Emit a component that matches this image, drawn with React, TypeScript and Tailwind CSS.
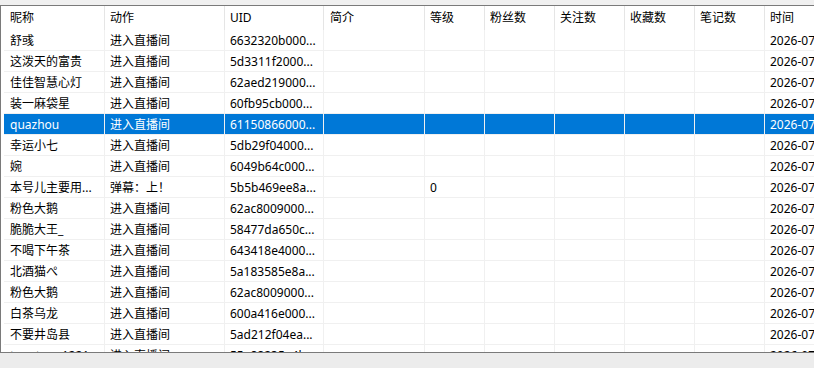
const font = { fontFamily: '"Noto Sans", "Noto Sans CJK SC", sans-serif' }

const cols = [
  { title: '昵称', w: 'w-[101px] pl-[6px]' },
  { title: '动作', w: 'w-[120px] pl-[5px]' },
  { title: 'UID', w: 'w-[99px] pl-[5px]' },
  { title: '简介', w: 'w-[101px] pl-[6px]' },
  { title: '等级', w: 'w-[60px] pl-[5px]' },
  { title: '粉丝数', w: 'w-[70px] pl-[5px]' },
  { title: '关注数', w: 'w-[70px] pl-[5px]' },
  { title: '收藏数', w: 'w-[70px] pl-[5px]' },
  { title: '笔记数', w: 'w-[70px] pl-[5px]' },
  { title: '时间', w: 'w-[160px] pl-[5px]' },
]

const rows: string[][] = [
  ['舒彧', '进入直播间', '6632320b000...', '', ''],
  ['这泼天的富贵', '进入直播间', '5d3311f2000...', '', ''],
  ['佳佳智慧心灯', '进入直播间', '62aed219000...', '', ''],
  ['装一麻袋星', '进入直播间', '60fb95cb000...', '', ''],
  ['quazhou', '进入直播间', '61150866000...', '', ''],
  ['幸运小七', '进入直播间', '5db29f04000...', '', ''],
  ['婉', '进入直播间', '6049b64c000...', '', ''],
  ['本号儿主要用...', '弹幕：上！', '5b5b469ee8a...', '', '0'],
  ['粉色大鹅', '进入直播间', '62ac8009000...', '', ''],
  ['脆脆大王_', '进入直播间', '58477da650c...', '', ''],
  ['不喝下午茶', '进入直播间', '643418e4000...', '', ''],
  ['北酒猫ぺ', '进入直播间', '5a183585e8a...', '', ''],
  ['粉色大鹅', '进入直播间', '62ac8009000...', '', ''],
  ['白茶乌龙', '进入直播间', '600a416e000...', '', ''],
  ['不要井岛县', '进入直播间', '5ad212f04ea...', '', ''],
  ['tangtang1221', '进入直播间', '55a88235e4b...', '', ''],
]

export default function App() {
  return (
    <div className="w-[814px] h-[368px] overflow-hidden bg-[#f0f0f0] flex flex-col text-[12px] text-black" style={font}>
      <div className="h-[5px] shrink-0" />
      <div className="h-[348px] shrink-0 border-y border-l border-[#7a7a7a] bg-white pl-[3px] overflow-hidden">
        <div className="flex h-[24px] items-center">
          {cols.map((c) => (
            <div key={c.title} className={`${c.w} shrink-0 h-full flex items-center border-r border-[#e5e5e5] whitespace-nowrap`}>
              {c.title}
            </div>
          ))}
        </div>
        {rows.map((r, i) => {
          const sel = i === 4
          // time column runs past the window edge, like the real list
          const cells = [r[0], r[1], r[2], r[3], r[4], '', '', '', '', `2026-07-14 20:3${i % 10}:1${i % 6}`]
          return (
            <div key={i} className={`flex h-[21px] border-b border-[#f0f0f0] ${sel ? 'bg-[#0078d7] text-white' : ''}`}>
              {cols.map((c, j) => (
                <div key={j} className={`${c.w} shrink-0 h-full flex items-center pt-[2px] border-r border-[#f0f0f0] whitespace-nowrap overflow-hidden`}>
                  {cells[j]}
                </div>
              ))}
            </div>
          )
        })}
      </div>
      <div className="flex-1 bg-[#ececec]" />
    </div>
  )
}
